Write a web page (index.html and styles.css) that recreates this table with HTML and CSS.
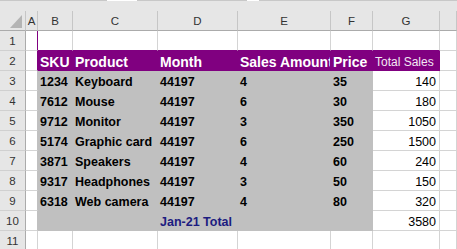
FILE: index.html
```html
<!DOCTYPE html>
<html>
<head>
<meta charset="utf-8">
<link rel="stylesheet" href="styles.css">
</head>
<body>
<div class="topstrip">
  <div class="seg grey w107"></div>
  <div class="seg white w30"></div>
  <div class="seg grey w110"></div>
  <div class="seg white w12"></div>
  <div class="seg grey fill"></div>
</div>
<div class="sheet">
  <div class="corner"><svg width="25" height="19" viewBox="0 0 25 19"><polygon points="22,4 22,17 10,17" fill="#b4b4b4"/></svg></div>
  <div class="ch">A</div><div class="ch">B</div><div class="ch">C</div><div class="ch">D</div><div class="ch">E</div><div class="ch">F</div><div class="ch">G</div><div class="ch"></div>

  <div class="rh">1</div>
  <div class="c a-p"></div><div class="c r1p"></div><div class="c r1p"></div><div class="c r1p"></div><div class="c r1p"></div><div class="c r1p"></div><div class="c r1p"></div><div class="c"></div>

  <div class="rh">2</div>
  <div class="c a-p"></div>
  <div class="c p hd">SKU</div><div class="c p hd">Product</div><div class="c p hd">Month</div><div class="c p hd">Sales Amount</div><div class="c p hd">Price</div><div class="c p hd2">Total Sales</div>
  <div class="c"></div>

  <div class="rh">3</div>
  <div class="c a-g"></div><div class="c g b">1234</div><div class="c g b">Keyboard</div><div class="c g b">44197</div><div class="c g b">4</div><div class="c g b">35</div><div class="c num">140</div><div class="c"></div>

  <div class="rh">4</div>
  <div class="c a-g"></div><div class="c g b">7612</div><div class="c g b">Mouse</div><div class="c g b">44197</div><div class="c g b">6</div><div class="c g b">30</div><div class="c num">180</div><div class="c"></div>

  <div class="rh">5</div>
  <div class="c a-g"></div><div class="c g b">9712</div><div class="c g b">Monitor</div><div class="c g b">44197</div><div class="c g b">3</div><div class="c g b">350</div><div class="c num">1050</div><div class="c"></div>

  <div class="rh">6</div>
  <div class="c a-g"></div><div class="c g b">5174</div><div class="c g b">Graphic card</div><div class="c g b">44197</div><div class="c g b">6</div><div class="c g b">250</div><div class="c num">1500</div><div class="c"></div>

  <div class="rh">7</div>
  <div class="c a-g"></div><div class="c g b">3871</div><div class="c g b">Speakers</div><div class="c g b">44197</div><div class="c g b">4</div><div class="c g b">60</div><div class="c num">240</div><div class="c"></div>

  <div class="rh">8</div>
  <div class="c a-g"></div><div class="c g b">9317</div><div class="c g b">Headphones</div><div class="c g b">44197</div><div class="c g b">3</div><div class="c g b">50</div><div class="c num">150</div><div class="c"></div>

  <div class="rh">9</div>
  <div class="c a-g"></div><div class="c g b">6318</div><div class="c g b">Web camera</div><div class="c g b">44197</div><div class="c g b">4</div><div class="c g b">80</div><div class="c num">320</div><div class="c"></div>

  <div class="rh">10</div>
  <div class="c a-g"></div><div class="c g"></div><div class="c g"></div><div class="c g b total span2">Jan-21 Total</div><div class="c g"></div><div class="c num">3580</div><div class="c"></div>

  <div class="rh">11</div>
  <div class="c"></div><div class="c"></div><div class="c"></div><div class="c"></div><div class="c"></div><div class="c"></div><div class="c"></div><div class="c"></div>
</div>
</body>
</html>
```

FILE: styles.css
```css
html, body {
  margin: 0;
  padding: 0;
  background: #ffffff;
  overflow: hidden;
  font-family: "Liberation Sans", Arial, sans-serif;
}

.topstrip {
  height: 11px;
  background: #e6e6e6;
  display: flex;
  align-items: flex-start;
}
.seg { height: 1px; }
.seg.grey { background: #c8c8c8; }
.seg.white { background: #ffffff; }
.w107 { width: 107px; }
.w30 { width: 30px; }
.w110 { width: 110px; }
.w12 { width: 12px; }
.seg.fill { flex: 1; }

.sheet {
  display: grid;
  grid-template-columns: 26px 12px 35px 85px 80px 93px 42px 67px 1fr;
  grid-template-rows: 20px repeat(11, 20px);
}

.corner {
  background: #e6e6e6;
  border-right: 1px solid #c6c6c6;
  border-bottom: 1px solid #ababab;
  box-sizing: border-box;
}
.corner svg { display: block; }

.ch {
  background: #e6e6e6;
  border-right: 1px solid #c6c6c6;
  border-bottom: 1px solid #ababab;
  box-sizing: border-box;
  color: #333333;
  font-size: 11.5px;
  display: flex;
  align-items: center;
  justify-content: center;
  padding-top: 1px;
}

.rh {
  background: #e6e6e6;
  border-right: 1px solid #ababab;
  border-bottom: 1px solid #d0d0d0;
  box-sizing: border-box;
  color: #333333;
  font-size: 11.5px;
  display: flex;
  align-items: center;
  justify-content: center;
  padding-top: 1px;
}

.c {
  box-sizing: border-box;
  border-right: 1px solid #d4d4d4;
  border-bottom: 1px solid #d4d4d4;
  font-size: 12.5px;
  line-height: 15px;
  padding: 4px 2px 0 2px;
  white-space: nowrap;
  overflow: hidden;
  color: #000000;
}

.a-p { border-right-color: #800080; }
.a-g { border-right-color: #c0c0c0; }
.r1p { border-bottom-color: #800080; }

.p {
  background: #800080;
  border-color: #800080;
}
.g {
  background: #c0c0c0;
  border-color: #c0c0c0;
}
.b { font-weight: bold; }

.hd {
  color: #ffffff;
  font-weight: bold;
  font-size: 14px;
  line-height: 16px;
  padding-top: 3px;
}
.hd2 {
  color: #f3e8f3;
  font-size: 12px;
  line-height: 16px;
  padding-top: 3px;
}

.num {
  text-align: right;
  padding-right: 3px;
}

.total { color: #1c1c80; }
.span2 { grid-column: span 2; }
```
